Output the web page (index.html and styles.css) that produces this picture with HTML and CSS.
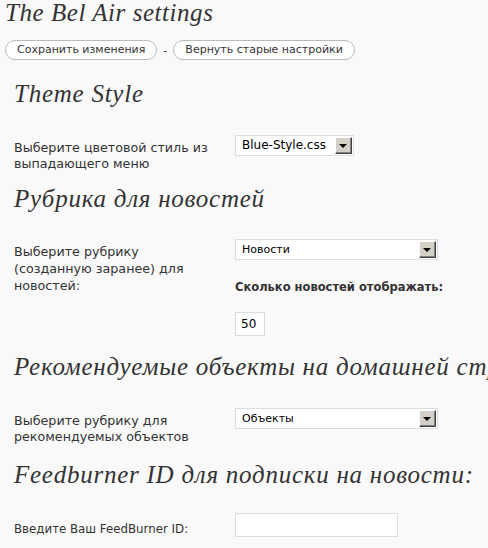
FILE: index.html
```html
<!DOCTYPE html>
<html>
<head>
<meta charset="utf-8">
<link rel="stylesheet" href="styles.css">
</head>
<body>
<div class="wrap">
  <h1 class="title">The Bel Air settings</h1>
  <div class="actions">
    <span class="btn">Сохранить изменения</span>
    <span class="dash">-</span>
    <span class="btn">Вернуть старые настройки</span>
  </div>

  <div class="section">
    <h2 class="head head-theme">Theme Style</h2>
    <div class="row row-theme">
      <div class="label">Выберите цветовой стиль из<br>выпадающего меню</div>
      <div class="field">
        <div class="select sel-small"><span class="sel-text sel-text-big">Blue-Style.css</span><span class="sel-btn"><span class="arrow"></span></span></div>
      </div>
    </div>

    <h2 class="head head-news">Рубрика для новостей</h2>
    <div class="row row-news">
      <div class="label label-tall">Выберите рубрику<br>(созданную заранее) для<br>новостей:</div>
      <div class="field">
        <div class="select sel-wide"><span class="sel-text">Новости</span><span class="sel-btn"><span class="arrow"></span></span></div>
        <p class="strong">Сколько новостей отображать:</p>
        <div class="input input-num">50</div>
      </div>
    </div>

    <h2 class="head head-feat">Рекомендуемые объекты на домашней странице</h2>
    <div class="row row-feat">
      <div class="label">Выберите рубрику для<br>рекомендуемых объектов</div>
      <div class="field">
        <div class="select sel-wide"><span class="sel-text">Объекты</span><span class="sel-btn"><span class="arrow"></span></span></div>
      </div>
    </div>

    <h2 class="head head-feed">Feedburner ID для подписки на новости:</h2>
    <div class="row row-feed">
      <div class="label label-feed">Введите Ваш FeedBurner ID:</div>
      <div class="field">
        <div class="input input-feed"></div>
      </div>
    </div>
  </div>
</div>
</body>
</html>
```
FILE: styles.css
```css
html, body {
  margin: 0;
  padding: 0;
  overflow: hidden;
}
body {
  background: #f9f9f9;
  font-family: "DejaVu Sans", Verdana, sans-serif;
  font-size: 11px;
  color: #333;
  width: 488px;
  height: 548px;
}
.wrap {
  padding-left: 5px;
  overflow: hidden;
}
.title {
  margin: 1px 0 0 0;
  font-family: "Liberation Serif", Georgia, serif;
  font-style: italic;
  font-weight: normal;
  font-size: 25px;
  letter-spacing: 0.55px;
  line-height: 24px;
  color: #333;
}
.actions {
  margin-top: 15px;
  display: flex;
  align-items: center;
  height: 20px;
}
.btn {
  box-sizing: border-box;
  height: 20px;
  line-height: 18px;
  padding: 0 11px;
  border: 1px solid #bbb;
  border-radius: 10px;
  background: #fff;
  color: #333;
  font-size: 11px;
  white-space: nowrap;
}
.dash {
  width: 16px;
  text-align: center;
  color: #333;
}
.section {
  padding-left: 9px;
}
.head {
  margin: 0;
  font-family: "Liberation Serif", Georgia, serif;
  font-style: italic;
  font-weight: normal;
  font-size: 25px;
  letter-spacing: 0.75px;
  line-height: 24px;
  color: #333;
  white-space: nowrap;
}
.head-theme { margin-top: 22px; }
.head-news { margin-top: 15px; }
.head-feat { margin-top: 19px; }
.head-feed { margin-top: 18px; }
.row {
  display: grid;
  grid-template-columns: 221px 1fr;
}
.row-theme { margin-top: 29px; }
.row-news { margin-top: 28px; }
.row-feat { margin-top: 29px; }
.row-feed { margin-top: 26px; }
.label {
  padding-top: 5px;
  line-height: 16px;
  font-size: 12.7px;
}
.label-tall {
  padding-top: 4px;
  line-height: 17px;
}
.label-feed {
  padding-top: 8px;
  font-size: 11.8px;
}
.select {
  box-sizing: border-box;
  display: flex;
  align-items: center;
  justify-content: space-between;
  height: 21px;
  border: 1px solid #ddd;
  background: #fff;
  padding: 0 1px 0 6px;
  color: #000;
}
.sel-small { width: 119px; }
.sel-wide { width: 203px; }
.sel-text {
  line-height: 19px;
}
.sel-text-big {
  font-size: 12px;
}
.sel-btn {
  box-sizing: border-box;
  width: 17px;
  height: 17px;
  background: #d4d0c8;
  border-top: 1px solid #fff;
  border-left: 1px solid #fff;
  border-right: 1px solid #404040;
  border-bottom: 1px solid #404040;
  box-shadow: inset -1px -1px 0 #808080;
  display: flex;
  align-items: center;
  justify-content: center;
}
.arrow {
  width: 0;
  height: 0;
  border-left: 4px solid transparent;
  border-right: 4px solid transparent;
  border-top: 4px solid #000;
  margin: 1px 1px 0 0;
}
.strong {
  margin: 19px 0 0 0;
  font-weight: bold;
  font-size: 11.5px;
  line-height: 16px;
}
.input {
  box-sizing: border-box;
  height: 24px;
  border: 1px solid #ddd;
  background: #fff;
  color: #000;
  line-height: 22px;
  padding-left: 5px;
}
.input-num {
  margin-top: 17px;
  width: 30px;
  font-size: 12px;
}
.input-feed {
  width: 163px;
}
```
